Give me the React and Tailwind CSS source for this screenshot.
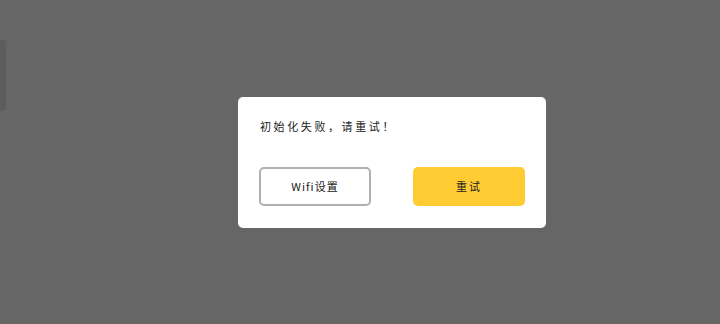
const font = { fontFamily: '"Noto Sans CJK SC", "Noto Sans", sans-serif' };

export default function App() {
  return (
    <div className="relative h-[324px] w-[720px] overflow-hidden bg-[#666666]" style={font}>
      <div className="absolute left-0 top-[40px] h-[71px] w-[6px] rounded-r-[4px] bg-[#5c5c5c]" />
      <div className="flex h-full items-center justify-center pl-[64px]">
        <div className="flex w-[308px] flex-col rounded-[5px] bg-white px-[21px] pb-[22px] pt-[19px]">
          <p className="pl-[1px] text-[11px] leading-[20px] tracking-[2.6px] text-[#222]">
            初始化失败，请重试！
          </p>
          <div className="mt-[31px] flex justify-between">
            <button className="h-[39px] w-[112px] rounded-[5px] border-2 border-[#b0b0b0] bg-white text-[11px] tracking-[1px] text-[#222]">
              Wifi设置
            </button>
            <button className="h-[39px] w-[112px] rounded-[5px] bg-[#ffcb33] text-[11px] tracking-[2px] text-[#222]">
              重试
            </button>
          </div>
        </div>
      </div>
    </div>
  );
}
